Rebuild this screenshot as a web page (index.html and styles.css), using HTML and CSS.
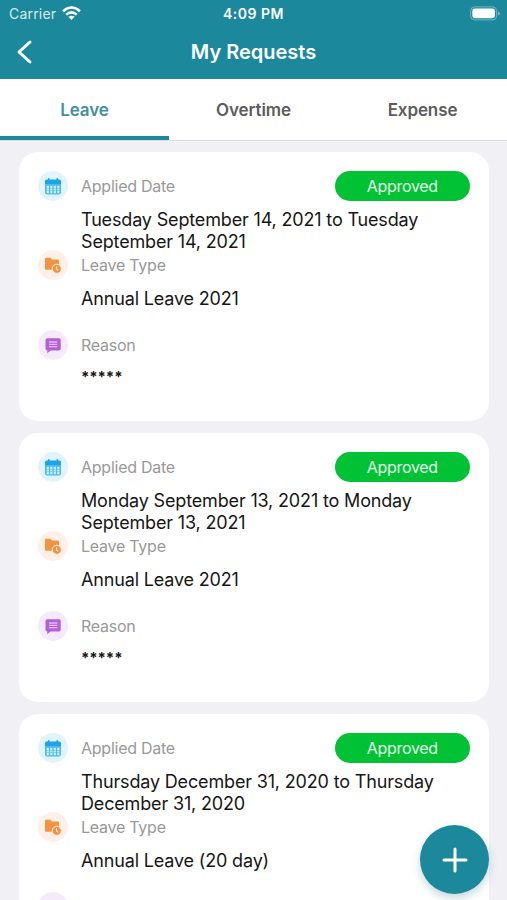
FILE: index.html
```html
<!DOCTYPE html>
<html lang="en">
    <head>
        <meta charset="UTF-8">
        <title>My Requests</title>
        <meta name="viewport" content="width=device-width, initial-scale=1.0">
        <link rel="stylesheet" href="styles.css">
    </head>
    <body>
        <!-- Icons shared by the cards -->
        <svg class="sprite">
            <symbol id="calendar" viewBox="0 0 30 30">
                <path fill="#1fa3e8" d="M7 13V10.2Q7 8.6 8.6 8.6H21.4Q23 8.6 23 10.2V13Z"/>
                <path fill="#45bdf0" d="M7 13H23V21.6Q23 23.4 21.2 23.4H8.8Q7 23.4 7 21.6Z"/>
                <path stroke="#1fa3e8" stroke-width="1.8" stroke-linecap="round" d="M10.7 8V10M19.3 8V10"/>
                <path stroke="#d4f0fc" stroke-width="2.2" stroke-dasharray="2.2 1.3" d="M8.7 15.8H21.4M8.7 18.5H21.4M8.7 21.2H21.4"/>
            </symbol>
            <symbol id="folder" viewBox="0 0 30 30">
                <path fill="#f09343" d="M7 9Q7 7.8 8.2 7.8H12.2L14 9.4H19.6Q21 9.4 21 10.8V19.8H7.8Q7 19.8 7 18.8Z"/>
                <circle cx="18.8" cy="18.8" r="4.6" fill="#f09343" stroke="#fef0e4" stroke-width="1"/>
                <path fill="none" stroke="#fef0e4" stroke-width="1.1" stroke-linecap="round" d="M18.6 16.8V19L19.8 20"/>
            </symbol>
            <symbol id="message" viewBox="0 0 30 30">
                <path fill="#b45fd8" d="M7.5 10Q7.5 8.3 9.2 8.3H21Q22.7 8.3 22.7 10V18.8Q22.7 20.5 21 20.5H12.4L9.3 23.3V20.5Q7.5 20.5 7.5 18.8Z"/>
                <path stroke="#e2bdf0" stroke-width="1.3" d="M11 12H19.3M11 14.3H19.3M11 16.6H19.3"/>
            </symbol>
        </svg>

        <header>
            <div class="status-bar">
                <div class="carrier">
                    <span>Carrier</span>
                    <svg width="19" height="15" viewBox="0 0 19 15" fill="none" stroke="#fff" stroke-width="2.5">
                        <path d="M1 5.2Q9.5 -2.2 18 5.2"/>
                        <path d="M4.2 8.6Q9.5 4.2 14.8 8.6"/>
                        <path fill="#fff" stroke="none" d="M6.4 10.8Q9.5 8.6 12.6 10.8L9.5 14Z"/>
                    </svg>
                </div>
                <div class="time">4:09 PM</div>
                <div class="battery">
                    <svg width="31" height="15" viewBox="0 0 31 15">
                        <rect x="0.6" y="0.9" width="26" height="13" rx="4" fill="none" stroke="#76b7c3"/>
                        <rect x="2.3" y="2.6" width="22.6" height="9.6" rx="2.4" fill="#fff"/>
                        <path fill="#76b7c3" d="M28 5.2Q30 6 30 7.4T28 9.6Z"/>
                    </svg>
                </div>
            </div>
            <div class="title-bar">
                <svg class="back" width="18" height="26" viewBox="0 0 18 26">
                    <path fill="none" stroke="#fff" stroke-width="3" stroke-linecap="round" stroke-linejoin="round" d="M15 3L4 13L15 23"/>
                </svg>
                <h1>My Requests</h1>
            </div>
        </header>

        <nav>
            <div class="tab active">Leave</div>
            <div class="tab">Overtime</div>
            <div class="tab">Expense</div>
        </nav>

        <main>
            <div class="card">
                <div class="row">
                    <svg class="icon blue"><use href="#calendar"/></svg>
                    <div class="label">Applied Date</div>
                    <div class="status">Approved</div>
                    <div class="value">Tuesday September 14, 2021 to Tuesday<br>September 14, 2021</div>
                </div>
                <div class="row">
                    <svg class="icon orange"><use href="#folder"/></svg>
                    <div class="label">Leave Type</div>
                    <div class="value">Annual Leave 2021</div>
                </div>
                <div class="row">
                    <svg class="icon purple"><use href="#message"/></svg>
                    <div class="label">Reason</div>
                    <div class="value stars">*****</div>
                </div>
            </div>
            <div class="card">
                <div class="row">
                    <svg class="icon blue"><use href="#calendar"/></svg>
                    <div class="label">Applied Date</div>
                    <div class="status">Approved</div>
                    <div class="value">Monday September 13, 2021 to Monday<br>September 13, 2021</div>
                </div>
                <div class="row">
                    <svg class="icon orange"><use href="#folder"/></svg>
                    <div class="label">Leave Type</div>
                    <div class="value">Annual Leave 2021</div>
                </div>
                <div class="row">
                    <svg class="icon purple"><use href="#message"/></svg>
                    <div class="label">Reason</div>
                    <div class="value stars">*****</div>
                </div>
            </div>
            <div class="card">
                <div class="row">
                    <svg class="icon blue"><use href="#calendar"/></svg>
                    <div class="label">Applied Date</div>
                    <div class="status">Approved</div>
                    <div class="value">Thursday December 31, 2020 to Thursday<br>December 31, 2020</div>
                </div>
                <div class="row">
                    <svg class="icon orange"><use href="#folder"/></svg>
                    <div class="label">Leave Type</div>
                    <div class="value">Annual Leave (20 day)</div>
                </div>
                <div class="row">
                    <div class="icon purple"></div>
                </div>
            </div>
        </main>

        <button class="add">
            <svg width="26" height="26" viewBox="0 0 26 26">
                <path stroke="#fff" stroke-width="3" stroke-linecap="round" d="M13 2V24M2 13H24"/>
            </svg>
        </button>
    </body>
</html>
```
FILE: styles.css
```css
* {
    box-sizing: border-box;
    font-family: 'Inter', sans-serif;
}

body {
    margin: 0;
    height: 900px;
    overflow: hidden;
    background-color: #f0f0f5;
}

.sprite {
    display: none;
}

header {
    height: 79px;
    background-color: #1b889b;
    color: white;
}

.status-bar {
    display: grid;
    grid-template-columns: 1fr auto 1fr;
    align-items: center;
    height: 27px;
    padding: 0 6px 0 9px;
}
.carrier {
    display: flex;
    align-items: center;
    gap: 6px;
    font-size: 14px;
    letter-spacing: 0.2px;
    color: #d9ecf0;
}
.time {
    margin-left: -3px;
    font-size: 14px;
    font-weight: 600;
    letter-spacing: 0.5px;
}
.battery {
    display: flex;
    justify-content: flex-end;
}

.title-bar {
    display: grid;
    grid-template-columns: 1fr auto 1fr;
    align-items: center;
    height: 50px;
    padding: 0 15px;
}
h1 {
    margin: 0;
    font-size: 20px;
    font-weight: 600;
}

nav {
    display: flex;
    height: 62px;
    background-color: white;
    border-bottom: 1px solid #dcdcdf;
}
.tab {
    flex: 1;
    height: 61px;
    line-height: 62px;
    text-align: center;
    font-size: 17px;
    font-weight: 600;
    letter-spacing: -0.1px;
    color: #5c5c5c;
}
.active {
    color: #43909f;
    border-bottom: 4px solid #1b889b;
}

main {
    display: grid;
    align-content: start;
    gap: 12px;
    height: 759px;
    padding: 11px 18.5px 0 19px;
    overflow: hidden;
}
.card {
    height: 269px;
    padding: 19px;
    border-radius: 19px;
    background-color: white;
}
.row {
    display: grid;
    grid-template-columns: 30px 1fr 134.5px;
    grid-template-rows: 30px auto;
    column-gap: 13px;
    height: 79.4px;
}
.icon {
    width: 30px;
    height: 30px;
    border-radius: 50%;
}
.blue {
    background-color: #e1f4fd;
}
.orange {
    background-color: #fef0e6;
}
.purple {
    background-color: #f4eafa;
}
.label {
    line-height: 30px;
    font-size: 16px;
    letter-spacing: -0.25px;
    color: #999;
}
.status {
    line-height: 30px;
    border-radius: 15px;
    background-color: #00c234;
    color: #e3fbe8;
    font-size: 16px;
    letter-spacing: -0.3px;
    text-align: center;
}
.value {
    grid-column: 2 / 4;
    padding-top: 8px;
    line-height: 21.5px;
    font-size: 18px;
    letter-spacing: -0.16px;
    white-space: nowrap;
    color: #161616;
}
.stars {
    padding-top: 6px;
    font-size: 15px;
    font-weight: 700;
    letter-spacing: -0.1px;
}

.add {
    position: absolute;
    left: 420px;
    top: 825px;
    display: grid;
    place-items: center;
    width: 69px;
    height: 69px;
    padding: 0;
    border: none;
    border-radius: 50%;
    background-color: #1b889b;
    box-shadow: 0 4px 8px rgba(27, 100, 125, 0.25);
}
```
